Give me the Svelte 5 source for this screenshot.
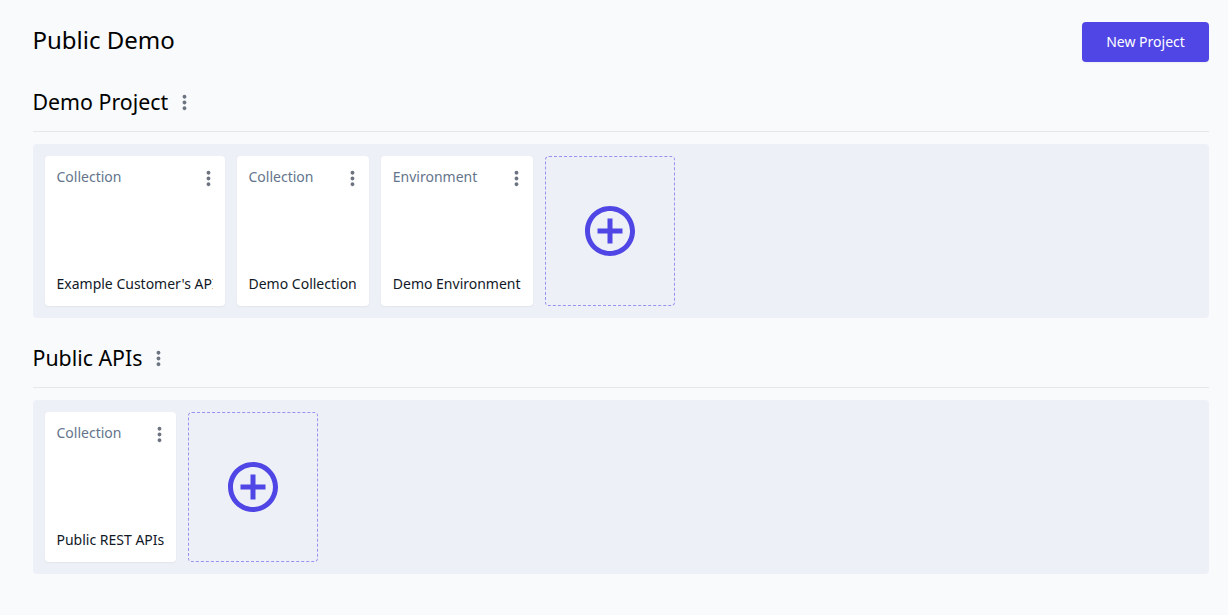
<script>
  const projects = [
    {
      name: 'Demo Project',
      items: [
        { type: 'Collection', name: "Example Customer's APIs" },
        { type: 'Collection', name: 'Demo Collection' },
        { type: 'Environment', name: 'Demo Environment' }
      ]
    },
    { name: 'Public APIs', items: [{ type: 'Collection', name: 'Public REST APIs' }] }
  ];
</script>

{#snippet dots()}
  <svg class="dots" viewBox="0 0 24 24" fill="currentColor" aria-hidden="true">
    <path d="M12 8c1.1 0 2-.9 2-2s-.9-2-2-2-2 .9-2 2 .9 2 2 2zm0 2c-1.1 0-2 .9-2 2s.9 2 2 2 2-.9 2-2-.9-2-2-2zm0 6c-1.1 0-2 .9-2 2s.9 2 2 2 2-.9 2-2-.9-2-2-2z" />
  </svg>
{/snippet}

<main>
  <header>
    <h1>Public Demo</h1>
    <button class="primary">New Project</button>
  </header>
  {#each projects as project}
    <section>
      <div class="heading">
        <h2>{project.name}</h2>
        <button class="menu" aria-label="Project menu">{@render dots()}</button>
      </div>
      <div class="tray">
        {#each project.items as item}
          <article>
            <div class="top">
              <span>{item.type}</span>
              <button class="menu" aria-label="Item menu">{@render dots()}</button>
            </div>
            <div class="name">{item.name}</div>
          </article>
        {/each}
        <button class="add" aria-label="Add item">
          <svg viewBox="0 0 24 24" fill="currentColor" aria-hidden="true">
            <path d="M13 7h-2v4H7v2h4v4h2v-4h4v-2h-4V7zm-1-5C6.48 2 2 6.48 2 12s4.480 10 10 10 10-4.480 10-10S17.520 2 12 2zm0 18c-4.410 0-8-3.590-8-8s3.590-8 8-8 8 3.590 8 8-3.590 8-8 8z" />
          </svg>
        </button>
      </div>
    </section>
  {/each}
</main>

<style>
  :global(body) {
    background: #f8fafc;
    font-family: 'Noto Sans', sans-serif;
  }
  main {
    box-sizing: border-box;
    min-height: 615px;
    padding: 22px 19px 0 32.5px;
    color: #000;
  }
  header {
    display: flex;
    height: 40px;
    justify-content: space-between;
  }
  h1, h2 {
    margin: 0;
    font-weight: 400;
  }
  h1 {
    font-size: 24px;
    line-height: 36px;
  }
  button {
    border: 0;
    padding: 0;
    background: none;
    font-family: inherit;
    cursor: pointer;
  }
  .primary {
    width: 127px;
    height: 40px;
    padding-bottom: 2px;
    border-radius: 4px;
    background: #4f46e5;
    box-shadow: 0 1px 2px rgb(0 0 0 / 5%);
    color: #fff;
    font-size: 14px;
  }
  section {
    padding-top: 24px;
  }
  .heading {
    box-sizing: border-box;
    display: flex;
    height: 46px;
    padding-bottom: 13px;
    border-bottom: 1px solid #e5e7eb;
    align-items: center;
    gap: 5px;
  }
  h2 {
    font-size: 21.33px;
    line-height: 32px;
  }
  .menu {
    display: block;
    flex: none;
    height: 23px;
    width: 23px;
    color: #6b7280;
  }
  .dots {
    display: block;
    width: 23px;
    height: 23px;
  }
  .tray {
    display: flex;
    box-sizing: border-box;
    height: 174px;
    margin-top: 12px;
    padding: 12px;
    gap: 12px;
    border-radius: 4px;
    background: #edf0f7;
  }
  article {
    box-sizing: border-box;
    display: flex;
    flex-direction: column;
    justify-content: space-between;
    max-width: 180px;
    height: 150px;
    padding: 11px 12px 12px;
    border-radius: 4px;
    background: #fff;
    box-shadow: 0 1px 2px rgb(0 0 0 / 5%);
    font-size: 14px;
    line-height: 20px;
  }
  .top {
    display: flex;
    justify-content: space-between;
    height: 20px;
    color: #64748b;
  }
  .top .menu {
    margin-right: -7.05px;
  }
  .name {
    overflow: hidden;
    white-space: nowrap;
    color: #111827;
  }
  .add {
    box-sizing: border-box;
    display: grid;
    place-items: center;
    width: 130px;
    height: 150px;
    border: 1px dashed #9792f0;
    border-radius: 4px;
    color: #4f46e5;
  }
  .add svg {
    display: block;
    width: 60px;
    height: 60px;
  }
</style>
